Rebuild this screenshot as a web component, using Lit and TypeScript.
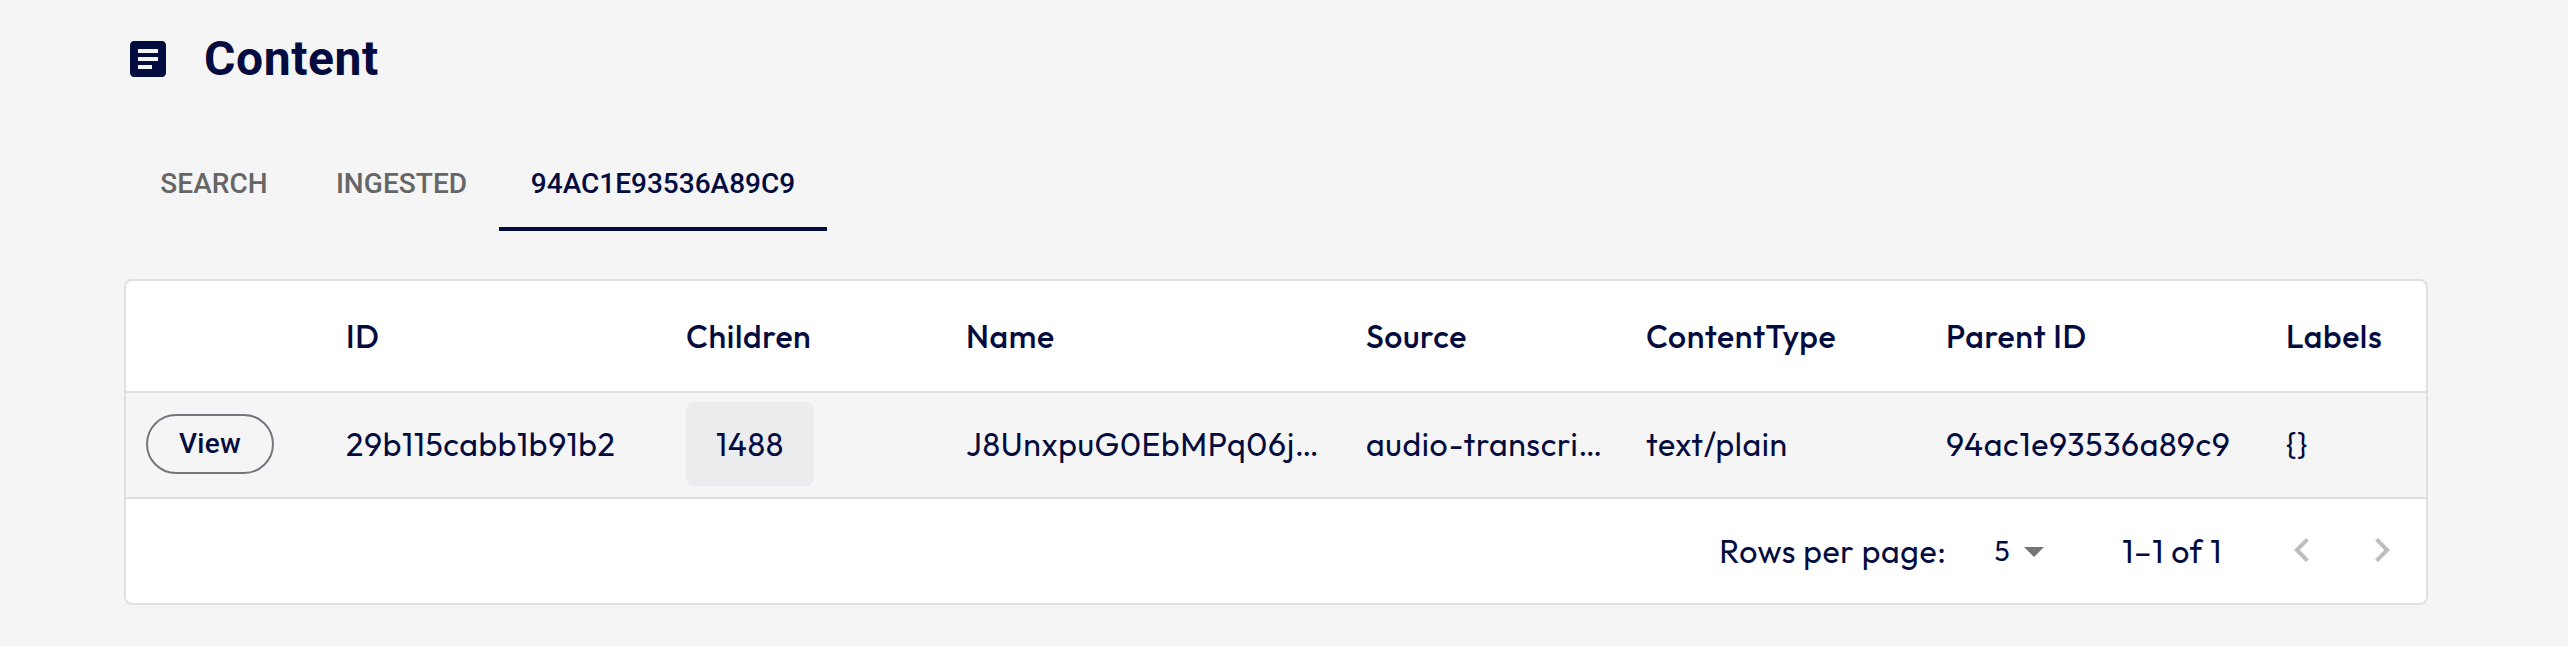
import { LitElement, html, css } from "lit";
import { customElement, property } from "lit/decorators.js";
import { classMap } from "lit/directives/class-map.js";

@customElement("content-tabs")
export class ContentTabs extends LitElement {
  @property({ type: Array }) tabs: string[] = [];
  @property({ type: Number }) active = 0;

  static styles = css`
    :host {
      display: grid;
      grid-template-columns: 180px 195px 328px;
      height: 96px;
    }
    .tab {
      box-sizing: border-box;
      height: 96px;
      padding: 5px 0 0;
      border: 0 solid transparent;
      border-bottom-width: 4px;
      background: none;
      font: 500 28px/87px Roboto, "Liberation Sans", sans-serif;
      letter-spacing: 0.05px;
      color: #666;
      text-align: center;
      text-transform: uppercase;
    }
    .active {
      letter-spacing: 0;
      color: #040b3e;
      border-bottom-color: #040b3e;
    }
  `;

  render() {
    return html`${this.tabs.map(
      (t, i) => html`<button class=${classMap({ tab: true, active: i === this.active })}>${t}</button>`
    )}`;
  }
}

interface Row {
  id: string;
  children: number;
  name: string;
  source: string;
  type: string;
  parent: string;
  labels: string;
}

@customElement("content-table")
export class ContentTable extends LitElement {
  @property({ type: Array }) rows: Row[] = [];

  static styles = css`
    :host {
      display: block;
      box-sizing: border-box;
      border: 2px solid #e0e0e0;
      border-radius: 8px;
      overflow: hidden;
      background: #fff;
      font: 400 32px/40px Outfit, Lato, sans-serif;
      letter-spacing: 0.64px;
      color: #040b3e;
    }
    .row {
      display: grid;
      grid-template-columns: 200px 340px 280px 400px 280px 300px 340px 160px;
      align-items: center;
      box-sizing: border-box;
      border-bottom: 2px solid #e0e0e0;
    }
    .head {
      height: 112px;
      font-weight: 500;
    }
    .body {
      height: 106px;
      padding-bottom: 2px;
      background: #f5f5f5;
    }
    .cell {
      padding-left: 20px;
      white-space: nowrap;
    }
    .view {
      box-sizing: border-box;
      width: 128px;
      height: 60px;
      padding: 0;
      border: 2px solid #76767f;
      border-radius: 30px;
      background: none;
      color: inherit;
      font: 500 28px/56px Roboto, "Liberation Sans", sans-serif;
      letter-spacing: 0.3px;
      display: block;
    }
    .badge {
      display: block;
      width: 128px;
      height: 84px;
      border-radius: 8px;
      background: #ebecee;
      line-height: 84px;
      text-align: center;
    }
    .footer {
      display: flex;
      align-items: center;
      justify-content: flex-end;
      height: 104px;
      padding-right: 20px;
    }
    .select {
      display: flex;
      align-items: center;
      margin: -1px 78px 0 48px;
      font-size: 28px;
    }
    .caret {
      display: block;
      margin: 3px 0 0 14px;
      fill: #757575;
    }
    .range {
      margin-right: 56px;
    }
    .nav {
      display: block;
      fill: #bdbdbd;
      margin-top: -2px;
    }
    .nav + .nav {
      margin-left: 32px;
    }
  `;

  render() {
    const heads = ["", "ID", "Children", "Name", "Source", "ContentType", "Parent ID", "Labels"];
    return html`
      <div class="row head">${heads.map((h) => html`<div class="cell">${h}</div>`)}</div>
      ${this.rows.map(
        (r) => html`<div class="row body">
          <div class="cell"><button class="view">View</button></div>
          <div class="cell">${r.id}</div>
          <div class="cell"><span class="badge">${r.children}</span></div>
          <div class="cell">${r.name}</div>
          <div class="cell">${r.source}</div>
          <div class="cell">${r.type}</div>
          <div class="cell">${r.parent}</div>
          <div class="cell">${r.labels}</div>
        </div>`
      )}
      <div class="footer">
        <span>Rows per page:</span>
        <span class="select">5
          <svg class="caret" width="20" height="10" viewBox="7 10 10 5"><path d="M7 10l5 5 5-5z" /></svg>
        </span>
        <span class="range">1–1 of 1</span>
        <svg class="nav" width="48" height="48" viewBox="0 0 24 24"><path d="M15.41 16.59L10.83 12l4.58-4.59L14 6l-6 6 6 6z" /></svg>
        <svg class="nav" width="48" height="48" viewBox="0 0 24 24"><path d="M8.59 16.59L13.17 12 8.59 7.41 10 6l6 6-6 6z" /></svg>
      </div>
    `;
  }
}

@customElement("app-root")
export class AppRoot extends LitElement {
  static styles = css`
    :host {
      display: block;
      box-sizing: border-box;
      width: 2568px;
      height: 646px;
      padding: 23px 140px 0 124px;
      background: #f5f5f5;
      color: #040b3e;
    }
    .title {
      display: flex;
      align-items: center;
      gap: 32px;
      height: 72px;
    }
    .icon {
      display: block;
      fill: currentColor;
    }
    h1 {
      margin: 0;
      font: 700 48px/72px Roboto, "Liberation Sans", sans-serif;
      letter-spacing: 0.6px;
    }
    content-tabs {
      margin: 40px 0 48px;
    }
  `;

  private rows: Row[] = [
    {
      id: "29b115cabb1b91b2",
      children: 1488,
      name: "J8UnxpuG0EbMPq06j…",
      source: "audio-transcri…",
      type: "text/plain",
      parent: "94ac1e93536a89c9",
      labels: "{}",
    },
  ];

  render() {
    return html`
      <div class="title">
        <svg class="icon" width="48" height="48" viewBox="0 0 24 24">
          <path d="M19 3H5c-1.1 0-2 .9-2 2v14c0 1.1.9 2 2 2h14c1.1 0 2-.9 2-2V5c0-1.1-.9-2-2-2zm-5 14H7v-2h7v2zm3-4H7v-2h10v2zm0-4H7V7h10v2z" />
        </svg>
        <h1>Content</h1>
      </div>
      <content-tabs .tabs=${["Search", "Ingested", "94ac1e93536a89c9"]} .active=${2}></content-tabs>
      <content-table .rows=${this.rows}></content-table>
    `;
  }
}
